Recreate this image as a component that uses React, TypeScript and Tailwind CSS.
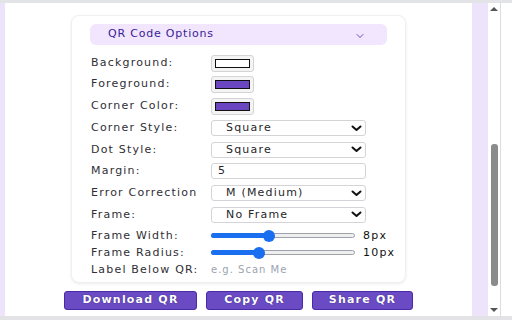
import { ChevronDown } from "lucide-react"

const font = { fontFamily: '"DejaVu Sans", Verdana, sans-serif' }

function Row({ label, children }: { label: string; children: React.ReactNode }) {
  return (
    <div className="flex items-center h-[16px]">
      <span className="w-[120px] shrink-0 text-[11px] tracking-[1.2px] text-[#2f2f35]">{label}</span>
      {children}
    </div>
  )
}

function Swatch({ color }: { color: string }) {
  return (
    <div className="w-[43px] h-[17px] rounded-[3px] border border-[#d4d4d8] bg-[#f4f4f5] p-[3px]">
      <div className="w-full h-full border border-[#111]" style={{ background: color }} />
    </div>
  )
}

function Chevron() {
  return (
    <svg width="11" height="7" viewBox="0 0 11 7" className="shrink-0">
      <path d="M1.5 1.5 L5.5 5 L9.5 1.5" fill="none" stroke="#111" strokeWidth="2" strokeLinecap="round" strokeLinejoin="round" />
    </svg>
  )
}

function Select({ value }: { value: string }) {
  return (
    <div className="w-[155px] h-[16px] flex items-center justify-between rounded-[3px] border border-[#d4d4d8] bg-white pl-[14px] pr-[3px]">
      <span className="text-[11px] tracking-[1.2px] text-[#27272a]">{value}</span>
      <Chevron />
    </div>
  )
}

function Slider({ pct, value }: { pct: number; value: string }) {
  return (
    <div className="flex items-center">
      <div className="relative w-[144px] h-[12px] flex items-center">
        <div className="w-full h-[5px] rounded-full border border-[#9ca3af] bg-[#efefef]" />
        <div className="absolute left-0 h-[5px] rounded-full bg-[#1a6ff0]" style={{ width: `${pct}%` }} />
        <div
          className="absolute w-[12px] h-[12px] rounded-full bg-[#1a6ff0]"
          style={{ left: `calc(${pct}% - 6px)` }}
        />
      </div>
      <span className="ml-[8px] text-[11px] tracking-[1.2px] text-[#111]">{value}</span>
    </div>
  )
}

function Btn({ children, w }: { children: React.ReactNode; w: string }) {
  return (
    <button className={`${w} h-[19px] rounded-[3px] border border-[#4b2aa8] bg-[#6a4bc4] text-white text-[11px] font-bold tracking-[1.2px] [text-shadow:0_0_1px_#24125e]`}>
      {children}
    </button>
  )
}

export default function App() {
  return (
    <div className="w-[512px] h-[320px] flex flex-col bg-[#e3e3e6] overflow-hidden" style={font}>
      <div className="h-[3px] bg-[#e2e4e8]" />
      <div className="flex h-[313px]">
        <div className="w-[5px] bg-[#ede3fb]" />
        <div className="w-[467px] bg-white flex flex-col items-center pt-[12px]">
          <div className="w-[335px] h-[268px] rounded-[8px] bg-white border border-[#f0f0f2] shadow-[0_1px_3px_rgba(0,0,0,0.08)] px-[18px] pt-[8px]">
            <div className="h-[21px] rounded-[6px] bg-[#f1e6fd] flex items-center justify-between pl-[18px] pr-[21px]">
              <span className="text-[11px] tracking-[0.8px] text-[#3a1c98]">QR Code Options</span>
              <ChevronDown className="w-[12px] h-[12px] mt-[2px] text-[#3a1c98]" strokeWidth={1.5} />
            </div>
            <div className="flex flex-col gap-[5.7px] mt-[10px] pl-[1px]">
              <Row label="Background:"><Swatch color="#ffffff" /></Row>
              <Row label="Foreground:"><Swatch color="#6b46c1" /></Row>
              <Row label="Corner Color:"><Swatch color="#6b46c1" /></Row>
              <Row label="Corner Style:"><Select value="Square" /></Row>
              <Row label="Dot Style:"><Select value="Square" /></Row>
              <Row label="Margin:">
                <div className="w-[155px] h-[16px] flex items-center rounded-[3px] border border-[#d4d4d8] bg-white pl-[6px]">
                  <span className="text-[11px] tracking-[1.2px] text-[#27272a]">5</span>
                </div>
              </Row>
              <Row label="Error Correction"><Select value="M (Medium)" /></Row>
              <Row label="Frame:"><Select value="No Frame" /></Row>
            </div>
            <div className="flex flex-col gap-[5px] mt-[7px] pl-[1px]">
              <div className="flex items-center h-[12px]">
                <span className="w-[120px] shrink-0 text-[11px] tracking-[1.2px] text-[#2f2f35]">Frame Width:</span>
                <Slider pct={40} value="8px" />
              </div>
              <div className="flex items-center h-[12px]">
                <span className="w-[120px] shrink-0 text-[11px] tracking-[1.2px] text-[#2f2f35]">Frame Radius:</span>
                <Slider pct={33} value="10px" />
              </div>
              <div className="flex items-center h-[12px]">
                <span className="w-[120px] shrink-0 text-[11px] tracking-[1.2px] text-[#2f2f35]">Label Below QR:</span>
                <span className="text-[10px] tracking-[1px] text-[#9ca3af]">e.g. Scan Me</span>
              </div>
            </div>
          </div>
          <div className="flex gap-[9px] mt-[8px]" >
            <Btn w="w-[133px]">Download QR</Btn>
            <Btn w="w-[97px]">Copy QR</Btn>
            <Btn w="w-[101px]">Share QR</Btn>
          </div>
        </div>
        <div className="w-[16px] bg-[#ede3fb]" />
        <div className="w-[12px] bg-white flex flex-col items-center justify-between py-[4px]">
          <div className="w-0 h-0 border-l-[4px] border-r-[4px] border-b-[4px] border-l-transparent border-r-transparent border-b-[#555]" />
          <div className="flex-1 w-full flex flex-col justify-end pb-[22px]">
            <div className="mx-auto w-[7px] h-[142px] rounded-[3px] bg-[#8b8b8b]" />
          </div>
          <div className="w-0 h-0 border-l-[4px] border-r-[4px] border-t-[4px] border-l-transparent border-r-transparent border-t-[#555]" />
        </div>
        <div className="flex-1 bg-white border-l border-[#dadce0]" />
      </div>
      <div className="flex-1 bg-[#e3e3e6]" />
    </div>
  )
}
